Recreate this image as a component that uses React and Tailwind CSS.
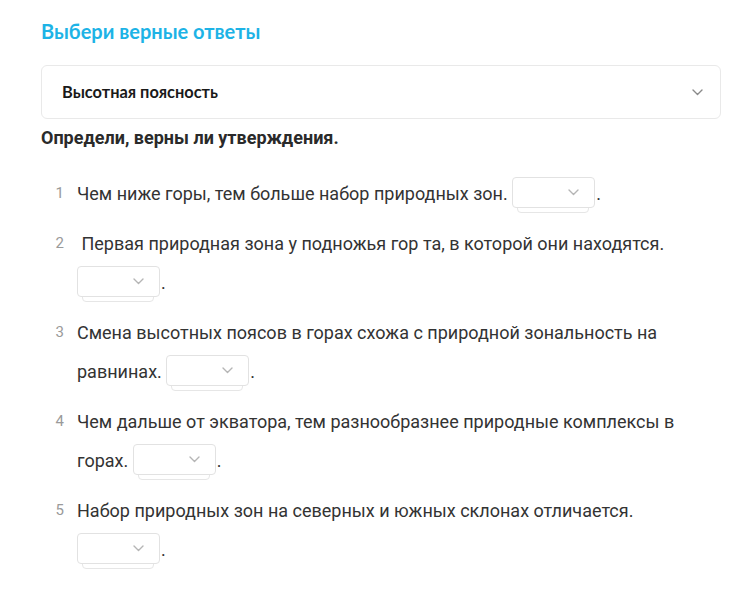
import React from "react";

const Chevron = ({ className = "" }) => (
  <svg className={className} width="11" height="7" viewBox="0 0 11 7" fill="none">
    <path d="M1 1l4.5 4.5L10 1" stroke="currentColor" strokeWidth="1.4" strokeLinecap="round" strokeLinejoin="round" />
  </svg>
);

const Select = () => (
  <span className="relative inline-block align-middle w-[83px] h-[31px] mr-[1px] -translate-y-[3px]">
    <span className="absolute left-[5px] right-[6px] top-[6px] h-[30px] border border-[#e6e6e6] rounded-[4px] bg-white"></span>
    <span className="absolute inset-0 border border-[#e2e2e2] rounded-[4px] bg-white flex items-center justify-end pr-[15px] text-[#b5b5b5]">
      <Chevron />
    </span>
  </span>
);

const items = [
  { n: 1, t: "Чем ниже горы, тем больше набор природных зон." },
  { n: 2, t: "\u00a0Первая природная зона у подножья гор та, в которой они находятся." },
  { n: 3, t: "Смена высотных поясов в горах схожа с природной зональность на равнинах." },
  { n: 4, t: "Чем дальше от экватора, тем разнообразнее природные комплексы в горах." },
  { n: 5, t: "Набор природных зон на северных и южных склонах отличается." },
];

export default function App() {
  return (
    <div className="bg-white w-[754px] h-[600px] pl-[41px] pr-[33px] pt-[17px]" style={{ fontFamily: "Roboto, 'Noto Sans', sans-serif" }}>
      <h1 className="text-[20px] leading-[28px] font-bold text-[#1db3e6]" style={{ fontFamily: "Lato, Roboto, sans-serif" }}>
        Выбери верные ответы
      </h1>
      <div className="mt-[20px] h-[54px] border border-[#e9e9e9] rounded-[6px] flex items-center justify-between pl-[20px] pr-[17px]">
        <span className="text-[16.4px] font-bold text-[#1a1a1a]" style={{ fontFamily: "Lato, Roboto, sans-serif" }}>Высотная поясность</span>
        <Chevron className="text-[#8a8a8a]" />
      </div>
      <p className="mt-[7px] text-[18px] leading-[24px] font-bold text-[#2a2a2a]">Определи, верны ли утверждения.</p>
      <ol className="mt-[24px] flex flex-col gap-[11px]">
        {items.map((it) => (
          <li key={it.n} className="flex text-[18px] leading-[39px] text-[#333333]">
            <span className="w-[36px] shrink-0 text-right pr-[13px] text-[15px] text-[#9a9a9a]">{it.n}</span>
            <span className="flex-1 pr-[20px]">
              {it.t}{" "}
              <Select />.
            </span>
          </li>
        ))}
      </ol>
    </div>
  );
}
